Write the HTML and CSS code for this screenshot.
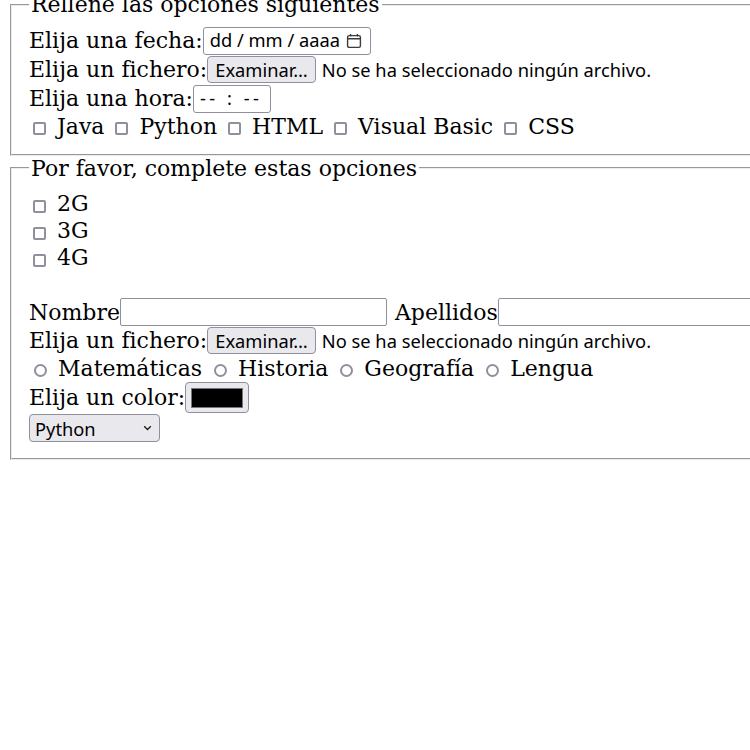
FILE: index.html
```html
<!DOCTYPE html>
<html lang="es">
<head>
<meta charset="utf-8">
<title>Formulario</title>
<link rel="stylesheet" href="styles.css">
</head>
<body>
<form class="form">
  <fieldset class="fs">
    <legend class="legend">Rellene las opciones siguientes</legend>
    <div class="row h28">Elija una fecha:<span class="date ui"><span class="date-text">dd / mm / aaaa</span><svg class="cal" width="16" height="16" viewBox="0 0 16 16"><path d="M3.2 2.6h9.6a1.6 1.6 0 0 1 1.6 1.6v8.6a1.6 1.6 0 0 1-1.6 1.6H3.2a1.6 1.6 0 0 1-1.6-1.6V4.2a1.6 1.6 0 0 1 1.6-1.6z M1.6 5.8h12.8 M4.6 1v2.6 M11.4 1v2.6" fill="none" stroke="#3b3b3b" stroke-width="1.4"/></svg></span></div>
    <div class="row h30">Elija un fichero:<span class="file ui"><span class="btn">Examinar…</span><span class="file-label">No se ha seleccionado ningún archivo.</span></span></div>
    <div class="row h28">Elija una hora:<span class="time ui">-- : --</span></div>
    <div class="line h28l"><input type="checkbox" class="check"> Java <input type="checkbox" class="check"> Python <input type="checkbox" class="check"> HTML <input type="checkbox" class="check"> Visual Basic <input type="checkbox" class="check"> CSS</div>
  </fieldset>

  <fieldset class="fs fs-second">
    <legend class="legend">Por favor, complete estas opciones</legend>
    <div class="line"><input type="checkbox" class="check"> 2G</div>
    <div class="line"><input type="checkbox" class="check"> 3G</div>
    <div class="line"><input type="checkbox" class="check"> 4G</div>
    <div class="line blank"></div>
    <div class="row h28">Nombre<input type="text" class="text ui"><span class="after">Apellidos</span><input type="text" class="text ui"></div>
    <div class="row h29">Elija un fichero:<span class="file ui"><span class="btn">Examinar…</span><span class="file-label">No se ha seleccionado ningún archivo.</span></span></div>
    <div class="line"><input type="radio" name="asig" class="radio"> Matemáticas <input type="radio" name="asig" class="radio"> Historia <input type="radio" name="asig" class="radio"> Geografía <input type="radio" name="asig" class="radio"> Lengua</div>
    <div class="row h31">Elija un color:<span class="color ui"><span class="swatch"></span></span></div>
    <div class="row h30">
      <span class="select ui"><span>Python</span><svg class="chev" width="9" height="6" viewBox="0 0 9 6"><path d="M1.2 1.2l3.3 3.3 3.3-3.3" fill="none" stroke="#1a1a1a" stroke-width="1.3"/></svg></span>
    </div>
  </fieldset>
</form>
</body>
</html>
```

FILE: styles.css
```css
html {
  overflow: hidden;
  background: #fff;
}

body {
  margin: -8px 0 8px 8px;
  font-family: "DejaVu Serif", serif;
  font-size: 22px;
  color: #000;
}

.form {
  margin: 0;
}

.fs {
  box-sizing: border-box;
  width: 742px;
  margin: 0 2px;
  padding: 9.5px 17px 13px;
  border: 2px groove #ececec;
  min-width: 0;
}

.fs-second {
  margin-top: 0;
  padding-bottom: 14.5px;
}

.legend {
  padding: 0 2px;
  white-space: nowrap;
}

.row {
  display: flex;
  align-items: center;
  white-space: nowrap;
}

.h28 { height: 28px; }
.h29 { height: 29px; }
.h30 { height: 30px; }
.h31 { height: 31px; }

.line {
  line-height: 27px;
  height: 27px;
  white-space: nowrap;
}

.h28l {
  line-height: 28px;
  height: 28px;
}

.ui {
  font-family: "Noto Sans", sans-serif;
  font-size: 18.3px;
  color: #000;
  box-sizing: border-box;
  flex-shrink: 0;
}

.date {
  display: flex;
  align-items: center;
  width: 168px;
  height: 28px;
  padding: 0 8px 0 6px;
  border: 1px solid #8f8f9d;
  border-radius: 3px;
  line-height: 1;
}

.cal {
  margin-left: auto;
}

.file {
  display: flex;
  align-items: center;
}

.btn {
  box-sizing: border-box;
  height: 27px;
  line-height: 25px;
  padding: 0 7px;
  border: 1px solid #8f8f9d;
  border-radius: 4px;
  background: #e9e9ed;
}

.file-label {
  margin-left: 6px;
}

.time {
  display: flex;
  align-items: center;
  width: 78px;
  height: 28px;
  padding: 0 6px;
  border: 1px solid #8f8f9d;
  border-radius: 3px;
  letter-spacing: 3.5px;
  line-height: 1;
}

.check,
.radio {
  appearance: none;
  -webkit-appearance: none;
  box-sizing: border-box;
  width: 13px;
  height: 13px;
  margin: 3px 4px 3px 4px;
  border: 2px solid #8f8f9d;
  background: #fff;
  vertical-align: -4.5px;
}

.check {
  border-radius: 2px;
}

.radio {
  margin: 3px 4px 3px 5px;
  border-radius: 50%;
  vertical-align: -3.5px;
}

.text {
  width: 267px;
  height: 28px;
  margin: 0;
  padding: 2px 4px;
  border: 1px solid #8f8f9d;
  border-radius: 2px;
  background: #fff;
  outline: none;
}

.after {
  margin-left: 8px;
}

.color {
  display: flex;
  width: 64px;
  height: 31px;
  padding: 4.5px 5px;
  border: 1px solid #8f8f9d;
  border-radius: 4px;
  background: #e9e9ed;
}

.swatch {
  flex: 1;
  background: #000;
  border: 1px solid #777;
}

.select {
  display: flex;
  align-items: center;
  justify-content: space-between;
  width: 131px;
  height: 28px;
  padding: 0 7px 0 5px;
  border: 1px solid #8f8f9d;
  border-radius: 4px;
  background: #e9e9ed;
}
```
